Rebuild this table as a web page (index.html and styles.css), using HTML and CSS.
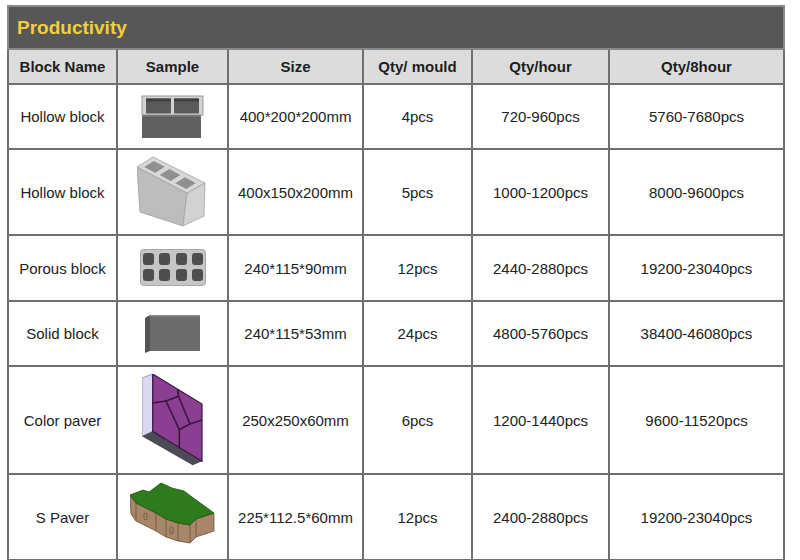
FILE: index.html
```html
<!DOCTYPE html>
<html>
<head>
<meta charset="utf-8">
<link rel="stylesheet" href="styles.css">
</head>
<body>
<table class="prod">
  <colgroup>
    <col class="c1"><col class="c2"><col class="c3"><col class="c4"><col class="c5"><col class="c6">
  </colgroup>
  <thead>
    <tr class="title-row"><th colspan="6" class="title">Productivity</th></tr>
    <tr class="head-row">
      <th>Block Name</th><th>Sample</th><th>Size</th><th>Qty/ mould</th><th>Qty/hour</th><th>Qty/8hour</th>
    </tr>
  </thead>
  <tbody>
    <tr class="r1">
      <td>Hollow block</td>
      <td class="img">
        <svg width="64" height="44" viewBox="0 0 64 44">
          <rect x="1" y="1" width="61" height="19" fill="#d2d2d2" stroke="#9a9a9a" stroke-width="1"/>
          <rect x="5" y="3.5" width="25" height="15" fill="#5a5a5a"/>
          <rect x="33" y="3.5" width="25" height="15" fill="#5a5a5a"/>
          <rect x="5" y="3.5" width="25" height="3" fill="#404040"/>
          <rect x="33" y="3.5" width="25" height="3" fill="#404040"/>
          <rect x="1" y="20" width="59" height="23" fill="#606060"/>
          <rect x="1" y="20" width="59" height="1.5" fill="#7a7a7a"/>
        </svg>
      </td>
      <td>400*200*200mm</td><td>4pcs</td><td>720-960pcs</td><td>5760-7680pcs</td>
    </tr>
    <tr class="r2">
      <td>Hollow block</td>
      <td class="img">
        <svg width="72" height="72" viewBox="0 0 72 72">
          <polygon points="0,11 50,37 46,70 3,56" fill="#bdbdbd" stroke="#9c9c9c" stroke-width="0.8"/>
          <polygon points="50,37 68,27 67,60 46,70" fill="#d2d2d2" stroke="#a5a5a5" stroke-width="0.8"/>
          <polygon points="0,11 16,1 68,27 50,37" fill="#d8d8d8" stroke="#a0a0a0" stroke-width="0.8"/>
          <polygon points="7.2,11.1 18.2,16.8 27.8,10.8 16.8,5.1" fill="#909090"/>
          <polygon points="22.7,19.1 33.7,24.9 43.3,18.9 32.3,13.1" fill="#909090"/>
          <polygon points="38.2,27.2 49.2,32.9 58.8,26.9 47.8,21.2" fill="#909090"/>
        </svg>
      </td>
      <td>400x150x200mm</td><td>5pcs</td><td>1000-1200pcs</td><td>8000-9600pcs</td>
    </tr>
    <tr class="r3">
      <td>Porous block</td>
      <td class="img">
        <svg width="66" height="38" viewBox="0 0 66 38">
          <rect x="0.5" y="0.5" width="65" height="36" rx="3" fill="#c6c6c6" stroke="#a8a8a8"/>
          <g fill="#4e4e4e">
            <rect x="3" y="4" width="11" height="12" rx="3"/>
            <rect x="19" y="4" width="11" height="12" rx="3"/>
            <rect x="36" y="4" width="11" height="12" rx="3"/>
            <rect x="52" y="4" width="11" height="12" rx="3"/>
            <rect x="3" y="20" width="11" height="12" rx="3"/>
            <rect x="19" y="20" width="11" height="12" rx="3"/>
            <rect x="36" y="20" width="11" height="12" rx="3"/>
            <rect x="52" y="20" width="11" height="12" rx="3"/>
          </g>
        </svg>
      </td>
      <td>240*115*90mm</td><td>12pcs</td><td>2440-2880pcs</td><td>19200-23040pcs</td>
    </tr>
    <tr class="r4">
      <td>Solid block</td>
      <td class="img">
        <svg width="56" height="38" viewBox="0 0 56 38">
          <rect x="5" y="0" width="50" height="36" fill="#6c6c6c"/>
          <rect x="5" y="0" width="50" height="1.5" fill="#8a8a8a"/>
          <polygon points="0,3 5,0 5,36 0,38" fill="#545454"/>
        </svg>
      </td>
      <td>240*115*53mm</td><td>24pcs</td><td>4800-5760pcs</td><td>38400-46080pcs</td>
    </tr>
    <tr class="r5">
      <td>Color paver</td>
      <td class="img">
        <svg width="62" height="93" viewBox="0 0 62 93">
          <polygon points="0,4 10.7,0 10.7,57.3 0,62.3" fill="#dcd8f2" stroke="#8d88a8" stroke-width="0.8"/>
          <polygon points="0,62.3 10.7,57.3 60,87.3 50.7,91.3" fill="#4b4b55"/>
          <polygon points="10.7,0 60,30 60,87.3 10.7,57.3" fill="#8b3f93" stroke="#3a1740" stroke-width="1.2"/>
          <g fill="none" stroke="#3a1740" stroke-width="1.6">
            <polygon points="24,27 36.5,22.3 48,50 37.3,55.7"/>
            <line x1="24" y1="27" x2="10.7" y2="29"/>
            <line x1="36.5" y1="22.3" x2="35.7" y2="15.2"/>
            <line x1="48" y1="50" x2="60" y2="46"/>
            <line x1="37.3" y1="55.7" x2="37.3" y2="74.5"/>
          </g>
        </svg>
      </td>
      <td>250x250x60mm</td><td>6pcs</td><td>1200-1440pcs</td><td>9600-11520pcs</td>
    </tr>
    <tr class="r6">
      <td>S Paver</td>
      <td class="img">
        <svg width="86" height="72" viewBox="0 0 86 72">
          <polygon points="0,14 6,22 26,32 36,38 48,42 60,44 66,38 84,32 84,50 66,56 60,62 48,60 36,56 26,50 6,40 1,33" fill="#a7866a" stroke="#6a5038" stroke-width="0.8"/>
          <g stroke="#6a5038" stroke-width="0.8" fill="none">
            <line x1="6" y1="22" x2="6" y2="40"/>
            <line x1="26" y1="32" x2="26" y2="50"/>
            <line x1="36" y1="38" x2="36" y2="56"/>
            <line x1="48" y1="42" x2="48" y2="60"/>
            <line x1="60" y1="44" x2="60" y2="62"/>
            <line x1="66" y1="38" x2="66" y2="56"/>
            <rect x="14" y="32" width="3" height="7" rx="1.5"/>
            <rect x="40" y="46" width="3" height="7" rx="1.5"/>
          </g>
          <polygon points="0,14 13,9 19,11 31,2 42,7 54,10 62,16 84,32 66,38 60,44 48,42 36,38 26,32 6,22" fill="#2f7a1c" stroke="#1f5210" stroke-width="0.8"/>
        </svg>
      </td>
      <td>225*112.5*60mm</td><td>12pcs</td><td>2400-2880pcs</td><td>19200-23040pcs</td>
    </tr>
  </tbody>
</table>
</body>
</html>
```

FILE: styles.css
```css
html, body {
  margin: 0;
  padding: 0;
  background: #ffffff;
}
body {
  padding: 5px 0 0 7px;
  font-family: "Liberation Sans", Arial, sans-serif;
  color: #222222;
}
.prod {
  border-collapse: collapse;
  table-layout: fixed;
  width: 776px;
  border: 2px solid #777777;
}
.c1 { width: 109px; }
.c2 { width: 111px; }
.c3 { width: 135px; }
.c4 { width: 109px; }
.c5 { width: 137px; }
.c6 { width: 175px; }
.prod th,
.prod td {
  border: 2px solid #6f6f6f;
  padding: 0;
  text-align: center;
  vertical-align: middle;
  font-size: 15px;
}
.title-row { height: 43px; }
.prod th.title {
  background: #575757;
  color: #f1cf3a;
  font-size: 19px;
  font-weight: bold;
  text-align: left;
  padding-left: 8px;
  border-color: #888888;
}
.head-row { height: 35px; }
.head-row th {
  background: #dcdcdc;
  font-weight: bold;
  color: #1e1e1e;
}
.r1 { height: 65px; }
.r2 { height: 86px; }
.r3 { height: 66px; }
.r4 { height: 65px; }
.r5 { height: 108px; }
.r6 { height: 86px; }
.img svg {
  display: block;
  margin: 0 auto;
}
```
